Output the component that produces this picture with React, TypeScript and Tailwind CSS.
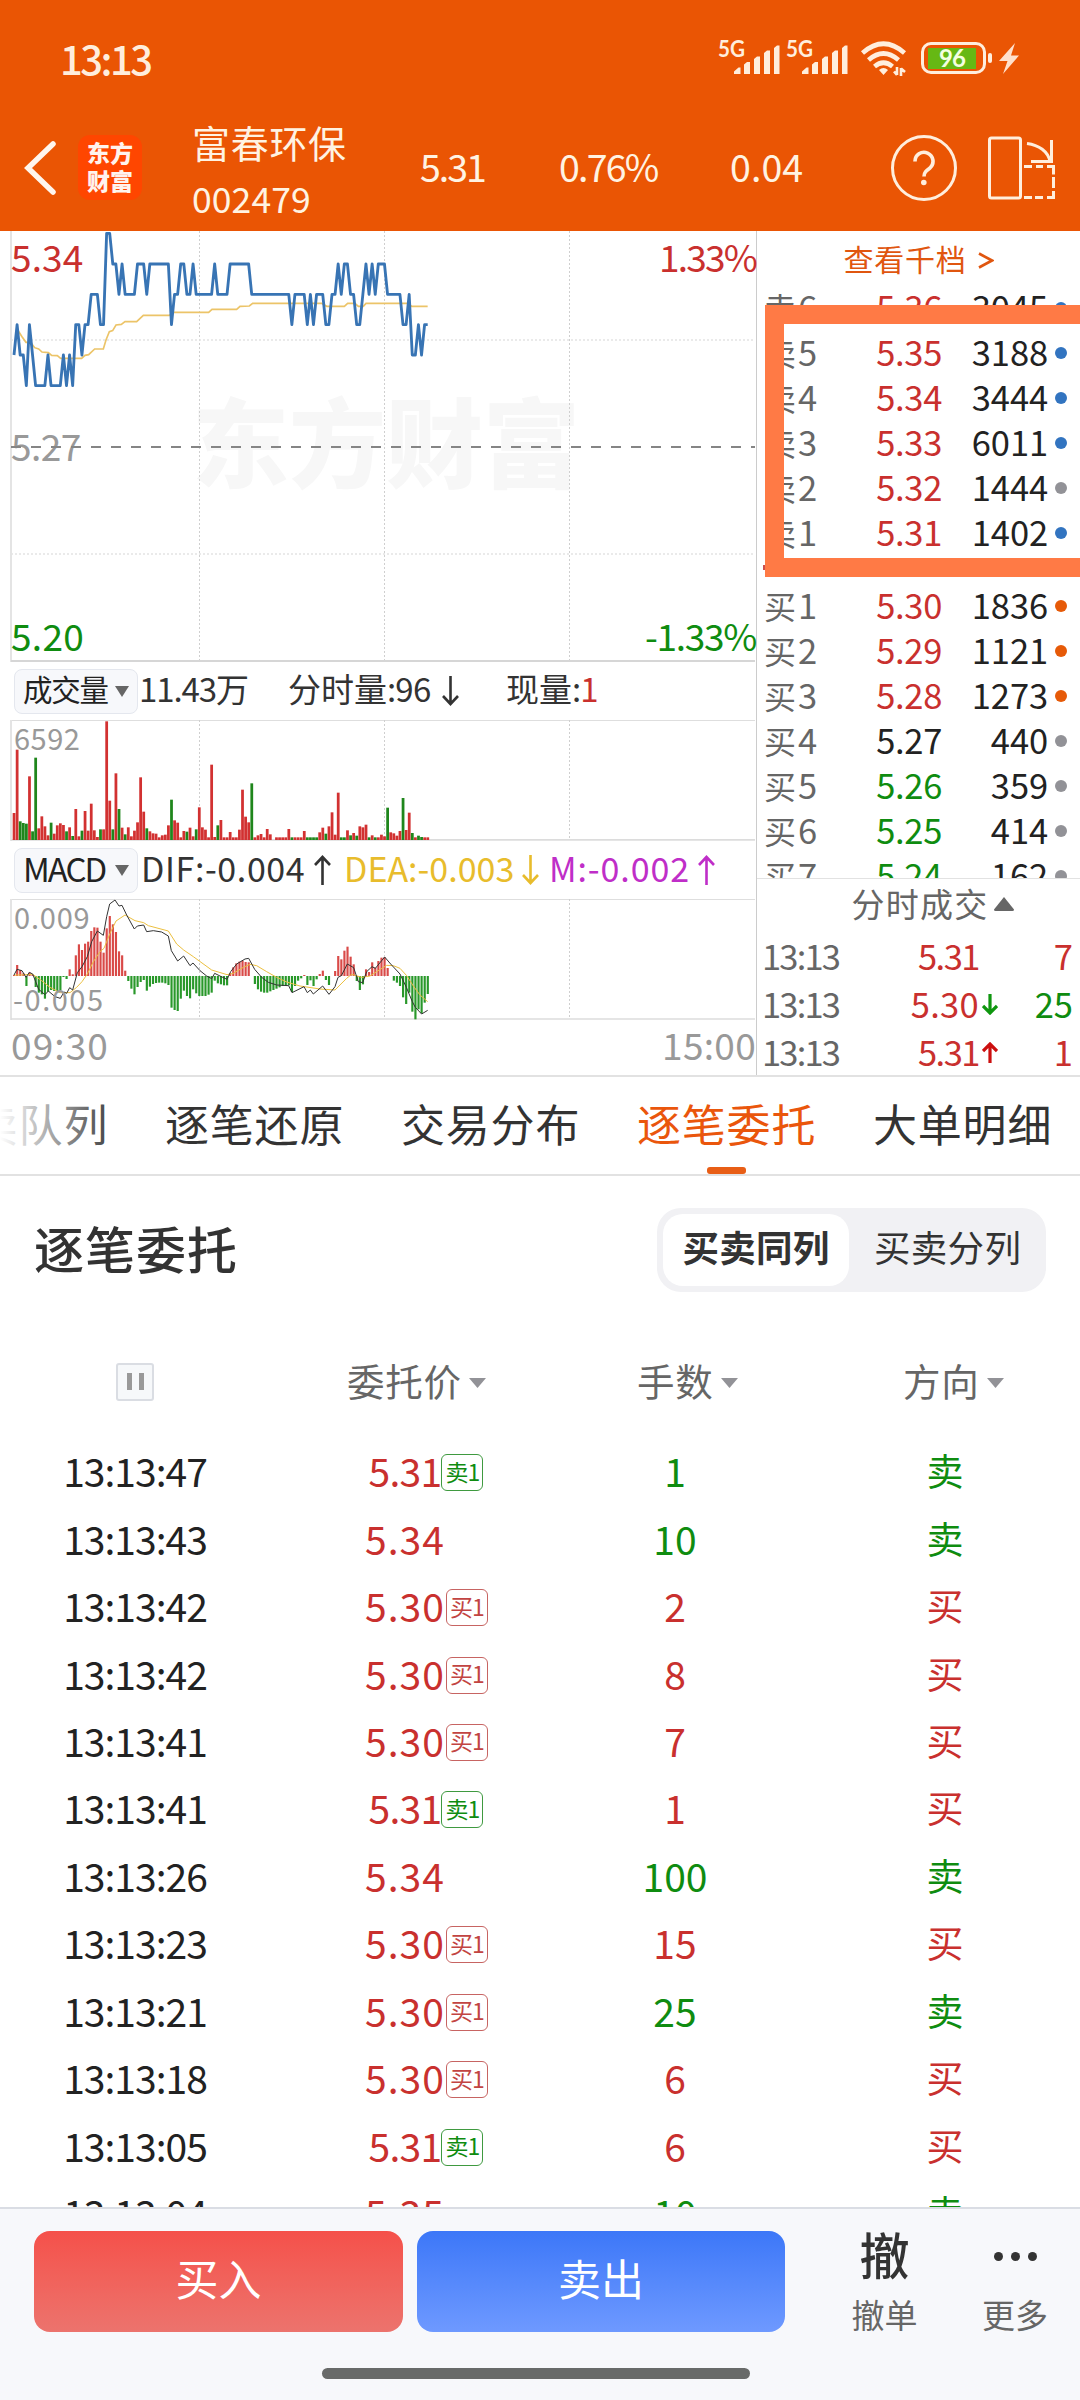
type Tone = "red" | "green" | "black";

const toneClass: Record<Tone, string> = {
  red: "text-[#c9302e]",
  green: "text-[#0f8c10]",
  black: "text-[#222222]",
};

// One digit per minute: 0 is the top price level, 5 the lowest one
const priceLevels =
  "43445345555455554545334332223300112122221112" +
  "111111132211221" +
  "22222212222" +
  "1111111" +
  "2222222222222" +
  "3222232322233221211223321212111" +
  "22222332443433";

const levelY = [25, 117, 208, 299, 390, 482];

const averageLine =
  "55,318 66,335 78,352 92,352 104,368 116,372 126,381 145,383 155,391 172,392 182,400 245,400 255,391 266,389 284,372 310,372 318,345 328,320 338,317 348,300 364,298 375,290 410,290 430,271 508,271 520,262 626,262 636,253 710,253 720,244 748,243 758,235 965,235 980,244 1033,244 1043,235 1065,235 1075,244 1090,244 1098,235 1225,235 1235,244 1283,244";

// Positive = red bar, negative = green bar
const volumes = [
  81, 271, -56, -51, -49, 191, -26, -247, 35, 71, 41, 14, -52, 19, 44, 50, 45, -26, 38, -12, 93, 11, -28, 87, 28,
  109, 29, 9, -32, 32, 356, 118, -32, 200, -93, 37, -17, 38, 11, 28, 53, 188, 85, -35, 26, 20, 19, 8, 14, 16, 44,
  -121, 59, 52, 8, 27, -25, 37, 11, -32, 98, 38, 31, 8, 226, 9, -44, 60, 8, 8, 24, 8, 8, 31, 151, 70, 53, -170, 8,
  14, 18, 8, 33, 17, 0, 8, 8, 8, 8, 33, -8, 8, 8, 8, 27, -8, -8, -8, -8, 23, 37, -19, 41, 83, 16, 142, -8, -8, 29,
  -14, 21, -13, 41, 38, 46, -8, 14, -8, 8, 16, 11, -97, 23, 20, 13, 27, -126, 30, 82, -21, 8, -13, -9, 8, 8,
];

const macd = [
  3, 33, 18, 8, -30, 10, 3, -33, -50, -55, -68, -47, -42, -45, -45, -43, -3, -9, 20, 5, 62, 95, 78, 97, 103, 135,
  146, 145, 103, 70, 143, 180, 155, 132, 74, 62, 16, -15, -38, -55, -33, -18, -12, -44, -32, -24, -21, -20, -20,
  -22, -27, -95, -102, -105, -68, -44, -60, -67, -40, -52, -60, -60, -60, -56, -50, -14, -22, -25, -28, -28, 8, 26,
  38, 43, 46, 42, 41, 0, -24, -40, -47, -50, -50, -46, -42, -38, -34, -30, -29, -28, -48, -30, -14, -7, 3, -27, -13,
  -30, -10, 6, 16, -12, -27, 0, 15, 60, 50, 76, 88, 58, 35, -15, -42, -25, 20, 12, 41, 25, 45, 55, 56, 24, 0, -14,
  -20, -30, -64, -84, -50, -107, -130, -100, -112, -80, -54,
];

const difLine =
  "42,825 51,808 66,812 78,832 88,817 98,822 116,868 135,884 145,873 165,890 181,895 192,876 200,880 209,863 218,870 232,818 246,800 262,770 275,725 292,693 310,706 320,650 329,612 345,600 357,618 366,616 380,645 403,687 412,678 431,675 440,695 460,692 485,696 505,708 514,752 533,783 551,768 570,797 579,789 600,812 620,828 635,836 644,820 660,828 681,838 692,815 710,792 735,777 746,775 764,808 785,832 805,847 830,855 866,857 876,878 912,860 922,878 931,870 940,882 968,858 987,883 1005,860 1014,832 1024,827 1042,792 1061,803 1075,845 1088,848 1100,815 1116,800 1126,805 1154,771 1172,792 1200,822 1219,862 1237,905 1246,922 1265,942 1283,931";

const deaLine =
  "42,825 60,825 98,823 125,842 150,862 180,878 210,878 230,862 246,845 262,822 280,785 300,755 312,745 330,700 348,663 375,645 405,662 431,668 445,677 505,693 530,732 551,750 580,770 635,810 681,824 700,820 730,802 750,793 770,797 800,815 830,832 860,846 900,858 960,867 1005,870 1040,835 1055,823 1085,832 1110,828 1130,815 1160,796 1180,797 1200,805 1220,827 1240,858 1260,885 1283,905";

const minuteX = (i: number) => 42 + i * 9.262;

const sells = [
  { label: "6", price: "5.36", volume: "3045", dot: "bg-[#3274c0]" },
  { label: "5", price: "5.35", volume: "3188", dot: "bg-[#3274c0]" },
  { label: "4", price: "5.34", volume: "3444", dot: "bg-[#3274c0]" },
  { label: "3", price: "5.33", volume: "6011", dot: "bg-[#3274c0]" },
  { label: "2", price: "5.32", volume: "1444", dot: "bg-[#929297]" },
  { label: "1", price: "5.31", volume: "1402", dot: "bg-[#3274c0]" },
];

const buys: { label: string; price: string; volume: string; dot: string; tone: Tone }[] = [
  { label: "1", price: "5.30", volume: "1836", dot: "bg-[#e65a08]", tone: "red" },
  { label: "2", price: "5.29", volume: "1121", dot: "bg-[#e65a08]", tone: "red" },
  { label: "3", price: "5.28", volume: "1273", dot: "bg-[#e65a08]", tone: "red" },
  { label: "4", price: "5.27", volume: "440", dot: "bg-[#929297]", tone: "black" },
  { label: "5", price: "5.26", volume: "359", dot: "bg-[#929297]", tone: "green" },
  { label: "6", price: "5.25", volume: "414", dot: "bg-[#929297]", tone: "green" },
  { label: "7", price: "5.24", volume: "162", dot: "bg-[#929297]", tone: "green" },
];

const ticks: { price: string; dir?: "up" | "down"; qty: string; tone: Tone }[] = [
  { price: "5.31", qty: "7", tone: "red" },
  { price: "5.30", dir: "down", qty: "25", tone: "green" },
  { price: "5.31", dir: "up", qty: "1", tone: "red" },
];

const orders: { time: string; price: string; badge?: "卖1" | "买1"; lots: string; lotTone: Tone; side: "卖" | "买" }[] = [
  { time: "13:13:47", price: "5.31", badge: "卖1", lots: "1", lotTone: "green", side: "卖" },
  { time: "13:13:43", price: "5.34", lots: "10", lotTone: "green", side: "卖" },
  { time: "13:13:42", price: "5.30", badge: "买1", lots: "2", lotTone: "red", side: "买" },
  { time: "13:13:42", price: "5.30", badge: "买1", lots: "8", lotTone: "red", side: "买" },
  { time: "13:13:41", price: "5.30", badge: "买1", lots: "7", lotTone: "red", side: "买" },
  { time: "13:13:41", price: "5.31", badge: "卖1", lots: "1", lotTone: "red", side: "买" },
  { time: "13:13:26", price: "5.34", lots: "100", lotTone: "green", side: "卖" },
  { time: "13:13:23", price: "5.30", badge: "买1", lots: "15", lotTone: "red", side: "买" },
  { time: "13:13:21", price: "5.30", badge: "买1", lots: "25", lotTone: "green", side: "卖" },
  { time: "13:13:18", price: "5.30", badge: "买1", lots: "6", lotTone: "red", side: "买" },
  { time: "13:13:05", price: "5.31", badge: "卖1", lots: "6", lotTone: "red", side: "买" },
  { time: "13:13:04", price: "5.35", lots: "10", lotTone: "green", side: "卖" },
];

function Signal() {
  return (
    <svg className="overflow-visible" width="62" height="34" viewBox="0 0 62 34" fill="#ffeedd">
      <text x="0" y="16" fontSize="22" fontWeight="700" textLength="27" lengthAdjust="spacingAndGlyphs" fontFamily="Lato, sans-serif">
        5G
      </text>
      <path d="M16 33v-2.500l4.500-4h2V33z" />
      <path d="M26 33V23.500l3-2.500h3v12z" />
      <path d="M36 33V18l3-2.500h3V33z" />
      <path d="M46 33V12l3-2.500h3V33z" />
      <path d="M56 33V7l3-2.500h2.500V33z" />
    </svg>
  );
}

function StatusBar() {
  return (
    <div className="flex h-[104px] items-center pt-[12px] pl-[60px] text-[#ffeedd]">
      <span className="w-[658px] text-[40px] leading-none font-medium tracking-[-2.500px]">13:13</span>
      <div className="flex items-center">
        <Signal />
        <span className="w-[6px]" />
        <Signal />
        {/* Wi-Fi with data arrows */}
        <svg className="ml-[12px]" width="48" height="36" viewBox="0 0 48 36" fill="none" stroke="#ffeedd">
          <path d="M2.500 13Q23.500-5.500 44.500 13" strokeWidth="4.600" />
          <path d="M8.500 20Q23.500 7 38.500 20" strokeWidth="4.600" />
          <path d="M14.500 26.500Q23.500 19 32.500 26.500" strokeWidth="4.600" />
          <path d="M23.500 35l-4.500-5q4.500-4.200 9 0z" fill="#ffeedd" stroke="none" />
          <path d="M37 27v8M34 31.500l3 3.500M41 36v-8M41 28.500l4 3.500" strokeWidth="2.600" />
        </svg>
        <div className="ml-[13px] flex h-[32px] w-[65px] items-center rounded-[10px] border-[3px] border-[#ffeedd] p-[4px]">
          <div className="flex h-[21px] w-[48px] items-center justify-center bg-[#66b814] font-['Lato'] text-[24px] leading-none font-bold tracking-[-1px] text-[#f4ffe0]">
            96
          </div>
        </div>
        <div className="ml-[2px] h-[10px] w-[4px] rounded-[2px] bg-[#ffeedd]" />
        <svg className="ml-[7px]" width="20" height="31" viewBox="0 0 20 31" fill="#ffe0cc">
          <path d="M16 0L0 18h8.500L4 31 20 12.500h-8z" />
        </svg>
      </div>
    </div>
  );
}

function NavBar() {
  return (
    <div className="flex h-[127px] items-center text-[#fff3e2]">
      <svg className="ml-[22px]" width="36" height="54" viewBox="0 0 36 54" fill="none" stroke="#fff6ee" strokeWidth="5.500">
        <path d="M31 3L6 27l25 24" strokeLinecap="round" />
      </svg>
      <div className="ml-[20px] flex h-[65px] w-[64px] flex-col items-center justify-center rounded-[12px] bg-[#ff4600] pb-[4px] text-[23px] leading-[28px] font-black text-[#fff3ee]">
        <span>东方</span>
        <span>财富</span>
      </div>
      <div className="ml-[50px] flex w-[228px] flex-col pt-[5px]">
        <span className="text-[38px] leading-[56px] tracking-[0.700px]">富春环保</span>
        <span className="text-[35.500px] leading-[56px] tracking-[0.100px]">002479</span>
      </div>
      <span className="-mt-[2px] w-[139px] text-[37.500px] tracking-[-2px]">5.31</span>
      <span className="-mt-[2px] w-[171px] text-[37.500px] tracking-[-1.800px]">0.76%</span>
      <span className="-mt-[2px] w-[161px] text-[37.500px] tracking-[0.100px]">0.04</span>
      <div className="flex h-[66px] w-[66px] items-center justify-center rounded-full border-[3px] border-[#ffeedd]">
        <svg width="24" height="36" viewBox="0 0 24 36" fill="none" stroke="#ffeedd" strokeWidth="3.600">
          <path d="M3 11.500a9 9 0 1 1 15 6.500c-4 3-6 4.500-6 8.500" />
          <circle cx="11.800" cy="32.500" r="2.800" fill="#ffeedd" stroke="none" />
        </svg>
      </div>
      {/* Switch to landscape */}
      <svg className="ml-[29px]" width="72" height="66" viewBox="0 0 72 66" fill="none" stroke="#ffeedd" strokeWidth="3">
        <rect x="3.500" y="3" width="31" height="60" rx="2" />
        <path d="M41 8.500c12 1.500 21 8 23 18M45 26.500h20.500V5" />
        <path d="M38 31.500h8M50 31.500h7M61 31.500h6.500v8M67.500 42v11M67.500 56v6.500H61M57 62.500h-8M46 62.500h-8" />
      </svg>
    </div>
  );
}

function Grid({ top, bottom }: { top: number; bottom: number }) {
  return (
    <g stroke="#cfcfcf" strokeWidth="3" strokeDasharray="6 6">
      <path d={`M598.500 ${top}V${bottom}`} />
      <path d={`M1153.500 ${top}V${bottom}`} />
      <path d={`M1708.500 ${top}V${bottom}`} />
    </g>
  );
}

function PriceChart() {
  const line = priceLevels
    .split("")
    .map((level, i) => `${minuteX(i).toFixed(1)},${levelY[Number(level)]}`)
    .join(" ");
  return (
    <div className="relative h-[431px] text-[37px] leading-none">
      <div className="absolute top-[158px] left-[192px] text-[97px] font-black text-[#f7f7f7]">东方财富</div>
      <svg className="absolute inset-0" width="756" height="431" viewBox="0 18 2268 1293" fill="none">
        <Grid top={18} bottom={1305} />
        <path d="M33 345H2265M33 987H2265" stroke="#e3e3e3" strokeWidth="4" strokeDasharray="6 6" />
        <path d="M33 18V1311" stroke="#e4e4e4" strokeWidth="6" />
        <path d="M33 1308H2265" stroke="#d6d6d6" strokeWidth="6" />
        <polyline points={averageLine} stroke="#ecc468" strokeWidth="5" />
      </svg>
      <span className="absolute top-[196px] left-[11px] tracking-[-0.500px] text-[#999999]">5.27</span>
      <svg className="absolute inset-0" width="756" height="431" viewBox="0 18 2268 1293" fill="none">
        <path d="M33 666H2265" stroke="#858585" strokeWidth="6" strokeDasharray="30 30" />
        <polyline points={line} stroke="#3874b4" strokeWidth="8.500" strokeLinejoin="round" />
      </svg>
      <span className="absolute top-[7px] left-[11px] tracking-[0.100px] text-[#c9302e]">5.34</span>
      <span className="absolute top-[7px] right-0 tracking-[-1.800px] text-[#c9302e]">1.33%</span>
      <span className="absolute top-[386px] left-[11px] tracking-[0.300px] text-[#0f8c10]">5.20</span>
      <span className="absolute top-[386px] right-0 tracking-[-1.300px] text-[#0f8c10]">-1.33%</span>
    </div>
  );
}

function IndicatorPill({ label, tight }: { label: string; tight?: boolean }) {
  return (
    <div className="ml-[14px] flex h-[45px] w-[124px] items-center justify-between rounded-[8px] border border-[#e4e7ee] bg-[#f7f8fb] pr-[8px] pl-[8px] text-[#222222]">
      <span className={tight ? "-mt-[3px] text-[33px] leading-none tracking-[-2px]" : "-mt-[5px] text-[29.500px] leading-none tracking-[-1.200px]"}>{label}</span>
      <svg width="14" height="11" viewBox="0 0 14 11" fill="#666666">
        <path d="M0 0h14L7 11z" />
      </svg>
    </div>
  );
}

function Arrow({ up }: { up?: boolean }) {
  return (
    <svg width="17" height="30" viewBox="0 0 17 30" fill="none" stroke="currentColor" strokeWidth="2.600">
      <path d={up ? "M8.500 30V2M1 10l7.500-8L16 10" : "M8.500 0v28M1 20l7.500 8 7.500-8"} />
    </svg>
  );
}

function VolumeChart() {
  return (
    <div className="relative h-[121px]">
      <svg className="absolute inset-0" width="756" height="121" viewBox="0 60 2268 363">
        <path d="M33 61.500H2265" stroke="#dedede" strokeWidth="3" />
        <path d="M33 60V423" stroke="#e4e4e4" strokeWidth="6" />
        <path d="M33 419.500H2265" stroke="#dcdcdc" strokeWidth="5" />
        <Grid top={60} bottom={417} />
      </svg>
      <span className="absolute top-[3px] left-[14px] text-[29px] leading-none tracking-[0.500px] text-[#999999]">6592</span>
      <svg className="absolute inset-0" width="756" height="121" viewBox="0 60 2268 363">
        {volumes.map((v, i) => (
          <rect key={i} x={minuteX(i) - 4} y={420 - Math.abs(v)} width="8.300" height={Math.abs(v)} fill={v > 0 ? "#d23131" : "#1f861c"} />
        ))}
      </svg>
    </div>
  );
}

function MacdChart() {
  return (
    <div className="relative h-[121px]">
      <svg className="absolute inset-0" width="756" height="121" viewBox="0 597 2268 363" fill="none">
        <path d="M33 598.500H2265" stroke="#dedede" strokeWidth="3" />
        <path d="M33 597V960" stroke="#e4e4e4" strokeWidth="6" />
        <path d="M33 957H2265" stroke="#dcdcdc" strokeWidth="5" />
        <Grid top={597} bottom={954} />
        {macd.map((v, i) => (
          <rect key={i} x={minuteX(i) - 3} y={v > 0 ? 828 - v : 828} width="6.500" height={Math.abs(v)} fill={v > 0 ? "#d94a48" : "#29982a"} />
        ))}
        <polyline points={deaLine} stroke="#ecc040" strokeWidth="3" />
        <polyline points={difLine} stroke="#333333" strokeWidth="3" />
      </svg>
      <span className="absolute top-[3px] left-[14px] text-[29px] leading-none tracking-[0.800px] text-[#999999]">0.009</span>
      <span className="absolute top-[85px] left-[13px] text-[29px] leading-none tracking-[1.500px] text-[#999999]">-0.005</span>
    </div>
  );
}

function BookRow({ side, label, price, volume, dot, tone }: { side: string; label: string; price: string; volume: string; dot: string; tone: Tone }) {
  return (
    <div className="flex h-[45px] shrink-0 items-center text-[34.500px] leading-none">
      <span className="w-[77px] pl-[7px] text-[#666666]">
        <span className="text-[32px]">{side}</span>
        <span className="pl-[2px]">{label}</span>
      </span>
      <span className={`w-[108px] text-right tracking-[-0.300px] ${toneClass[tone]}`}>{price}</span>
      <span className="w-[106px] text-right tracking-[-0.100px] text-[#222222]">{volume}</span>
      <span className={`mt-[4px] ml-[7px] h-[12px] w-[12px] rounded-full ${dot}`} />
    </div>
  );
}

function OrderBook() {
  return (
    <div className="flex w-[324px] flex-col border-l border-[#cccccc]">
      <div className="flex h-[53px] items-center justify-center pt-px text-[30px] leading-none tracking-[0.800px] text-[#e0560f]">
        <span>查看千档</span>
        <svg className="mt-[6px] ml-[11px]" width="16" height="17" viewBox="0 0 16 17" fill="none" stroke="currentColor" strokeWidth="2.600">
          <path d="M1 1.500l13 7-13 7" />
        </svg>
      </div>
      <div className="relative flex h-[595px] flex-col overflow-hidden">
        {sells.map((r) => (
          <BookRow key={r.label} side="卖" {...r} tone="red" />
        ))}
        <div className="flex h-[28px] shrink-0 items-center pl-[6px]">
          <div className="h-[5px] w-[310px] bg-[#c9504e]" />
        </div>
        {buys.map((r) => (
          <BookRow key={r.label} side="买" {...r} />
        ))}
        {/* Highlight frame round the sell side, open to the screen edge */}
        <div className="absolute top-[21px] left-[8px] h-[272px] w-[340px] border-[19px] border-r-0 border-[#ff7a45]" />
      </div>
      <div className="flex h-[53px] items-center justify-center border-t border-[#e2e2e2] pb-[3px] pl-[29px] text-[33px] leading-none tracking-[1.200px] text-[#666666]">
        分时成交
        <svg className="mt-[1px] ml-[6px]" width="20" height="14" viewBox="0 0 20 14" fill="#666666">
          <path d="M10 0l10 12.500q0 1.500-1.500 1.500h-17Q0 14 0 12.500z" />
        </svg>
      </div>
      {ticks.map((t, i) => (
        <div key={i} className="flex h-[48px] shrink-0 items-center text-[34.500px] leading-none">
          <span className="w-[100px] pl-[5px] tracking-[-1.800px] text-[#666666]">13:13</span>
          <span className={`w-[122px] text-right text-[#c9302e] ${t.price === "5.31" ? "tracking-[-1.500px]" : "tracking-[0.300px]"}`}>{t.price}</span>
          <span className="mt-[3px] flex w-[19px] justify-end">
            {t.dir && (
              <svg width="16" height="21" viewBox="0 0 16 21" fill="none" strokeWidth="3.200" stroke={t.dir === "up" ? "#cc0f0f" : "#0f960f"}>
                <path d={t.dir === "up" ? "M8 21V2M1 9l7-7 7 7" : "M8 0v19M1 12l7 7 7-7"} />
              </svg>
            )}
          </span>
          <span className={`w-[75px] text-right ${toneClass[t.tone]}`}>{t.qty}</span>
        </div>
      ))}
    </div>
  );
}

function Quote() {
  return (
    <div className="flex h-[846px] border-b-2 border-[#e2e2e2]">
      <div className="w-[756px]">
        <PriceChart />
        <div className="flex h-[58px] items-center text-[33px] leading-none text-[#333333]">
          <IndicatorPill label="成交量" />
          <span className="-mt-[5px] w-[150px] pl-[1px] tracking-[-1.100px]">11.43万</span>
          <div className="flex w-[218px] items-center">
            <span className="-mt-[5px] mr-[9px] w-[145px]">分时量<span className="tracking-[-0.800px]">:96</span></span>
            <Arrow />
          </div>
          <span className="-mt-[5px]">现量<span className="tracking-[-1px]">:</span><span className="text-[#c9302e]">1</span></span>
        </div>
        <VolumeChart />
        <div className="flex h-[58px] items-center text-[34px] leading-none text-[#333333]">
          <IndicatorPill label="MACD" tight />
          <div className="ml-[3px] flex w-[203px] items-center">
            <span className="-mt-[4px] w-[173px] tracking-[0.600px]">DIF:-0.004</span>
            <Arrow up />
          </div>
          <div className="flex w-[205px] items-center text-[#e8bc2c]">
            <span className="-mt-[4px] w-[178px]">DEA:-0.003</span>
            <Arrow />
          </div>
          <div className="flex items-center text-[#bf2ec8]">
            <span className="-mt-[4px] w-[149px] tracking-[0.900px]">M:-0.002</span>
            <Arrow up />
          </div>
        </div>
        <MacdChart />
        <div className="flex justify-between pt-[6px] pl-[11px] text-[37px] leading-none text-[#999999]">
          <span className="tracking-[1.100px]">09:30</span>
          <span className="tracking-[0.300px]">15:00</span>
        </div>
      </div>
      <OrderBook />
    </div>
  );
}

function Tabs() {
  const tabs = ["买卖队列", "逐笔还原", "交易分布", "逐笔委托", "大单明细"];
  return (
    <div className="relative flex h-[99px] overflow-hidden border-b-2 border-[#e2e2e2]">
      <div className="-ml-[71px] flex">
        {tabs.map((tab, i) => (
          <div key={tab} className="relative flex w-[236px] shrink-0 items-center">
            <span className={`-mt-[5px] text-[44px] leading-none tracking-[0.800px] ${i === 3 ? "text-[#ea560c]" : "text-[#333333]"}`}>{tab}</span>
            {i === 3 && <span className="absolute bottom-0 left-[70px] h-[7px] w-[39px] rounded-[3px] bg-[#e85e16]" />}
          </div>
        ))}
      </div>
      <div className="absolute inset-y-0 left-0 w-[120px] bg-gradient-to-r from-white to-white/0" />
    </div>
  );
}

function SortLabel({ text }: { text: string }) {
  return (
    <div className="flex items-center">
      <span className="text-[37.500px] leading-none tracking-[0.800px]">{text}</span>
      <svg className="mt-[5px] ml-[7px]" width="17" height="10" viewBox="0 0 17 10" fill="#929297">
        <path d="M0 0h17L8.500 10z" />
      </svg>
    </div>
  );
}

function OrderTable() {
  return (
    <div className="flex h-[1031px] flex-col overflow-hidden">
      <div className="flex h-[147px] shrink-0 items-center justify-between pr-[34px] pl-[34px]">
        <h1 className="-mt-[6px] text-[50px] leading-none font-medium tracking-[1px] text-[#333333]">逐笔委托</h1>
        <div className="flex h-[84px] w-[389px] items-center rounded-[24px] bg-[#f1f1f4] p-[6px] text-[36.500px] leading-none tracking-[0.300px] text-[#333333]">
          <div className="flex h-[72px] w-[186px] items-center justify-center rounded-[20px] bg-white pb-[4px] font-bold">买卖同列</div>
          <div className="flex-1 pb-[4px] pl-[25px]">买卖分列</div>
        </div>
      </div>
      <div className="grid h-[114px] shrink-0 grid-cols-4 items-center text-[#666666]">
        <div className="mx-auto mt-[3px] flex h-[38px] w-[38px] items-center justify-center gap-[7px] rounded-[3px] border-2 border-[#dadde3] bg-[#f6f8fa]">
          <span className="h-[17px] w-[5px] bg-[#999999]" />
          <span className="h-[17px] w-[5px] bg-[#999999]" />
        </div>
        <div className="pl-[77px]">
          <SortLabel text="委托价" />
        </div>
        <div className="pl-[97px]">
          <SortLabel text="手数" />
        </div>
        <div className="pl-[93px]">
          <SortLabel text="方向" />
        </div>
      </div>
      {orders.map((o, i) => (
        <div key={i} className="grid h-[67.450px] shrink-0 grid-cols-4 items-center text-center text-[39px] leading-none">
          <span className="tracking-[-1px] text-[#222222]">{o.time}</span>
          <span className="flex justify-center">
            <span className={`relative text-[#c9302e] ${o.price === "5.31" ? "tracking-[-0.700px]" : "tracking-[1px]"}`}>
              {o.price}
              {o.badge && (
                <span
                  className={`absolute top-[3px] left-full flex h-[37px] w-[42px] items-center justify-center rounded-[6px] border-[1.500px] pb-[3px] text-[23px] leading-none tracking-[-1px] ${
                    o.badge === "卖1" ? "border-[#3f9a40] text-[#0f8c10]" : "ml-[1px] border-[#c76462] text-[#c24442]"
                  }`}
                >
                  {o.badge}
                </span>
              )}
            </span>
          </span>
          <span className={toneClass[o.lotTone]}>{o.lots}</span>
          <span className={`text-[37px] ${o.side === "卖" ? toneClass.green : toneClass.red}`}>{o.side}</span>
        </div>
      ))}
    </div>
  );
}

function BottomBar() {
  return (
    <div className="h-[193px] border-t-2 border-[#dadde4] bg-[#f7f8fb]">
      <div className="flex pt-[22px] pl-[34px]">
        <button className="h-[101px] w-[369px] rounded-[16px] bg-gradient-to-b from-[#f5504a] to-[#ec736d] pb-[8px] text-[43px] leading-none text-white">买入</button>
        <button className="ml-[14px] h-[101px] w-[368px] rounded-[16px] bg-gradient-to-b from-[#3c77f8] to-[#6e99ff] pb-[8px] text-[43px] leading-none text-white">卖出</button>
        <div className="ml-[34px] flex w-[131px] flex-col items-center">
          <span className="-mt-[3px] text-[50px] leading-none font-medium text-[#333333]">撤</span>
          <span className="mt-[20px] text-[33px] leading-none text-[#666666]">撤单</span>
        </div>
        <div className="flex w-[130px] flex-col items-center">
          <div className="flex h-[50px] items-center gap-[8px]">
            <span className="h-[9px] w-[9px] rounded-full bg-[#333333]" />
            <span className="h-[9px] w-[9px] rounded-full bg-[#333333]" />
            <span className="h-[9px] w-[9px] rounded-full bg-[#333333]" />
          </div>
          <span className="mt-[17px] text-[33px] leading-none text-[#666666]">更多</span>
        </div>
      </div>
      <div className="mt-[36px] ml-[322px] h-[11px] w-[428px] rounded-full bg-[#686a69]" />
    </div>
  );
}

export default function App() {
  return (
    <div className="h-[2400px] w-[1080px] overflow-hidden bg-white font-['Noto_Sans_CJK_SC',sans-serif] whitespace-nowrap">
      <div className="bg-[#ea5504]">
        <StatusBar />
        <NavBar />
      </div>
      <Quote />
      <Tabs />
      <OrderTable />
      <BottomBar />
    </div>
  );
}
